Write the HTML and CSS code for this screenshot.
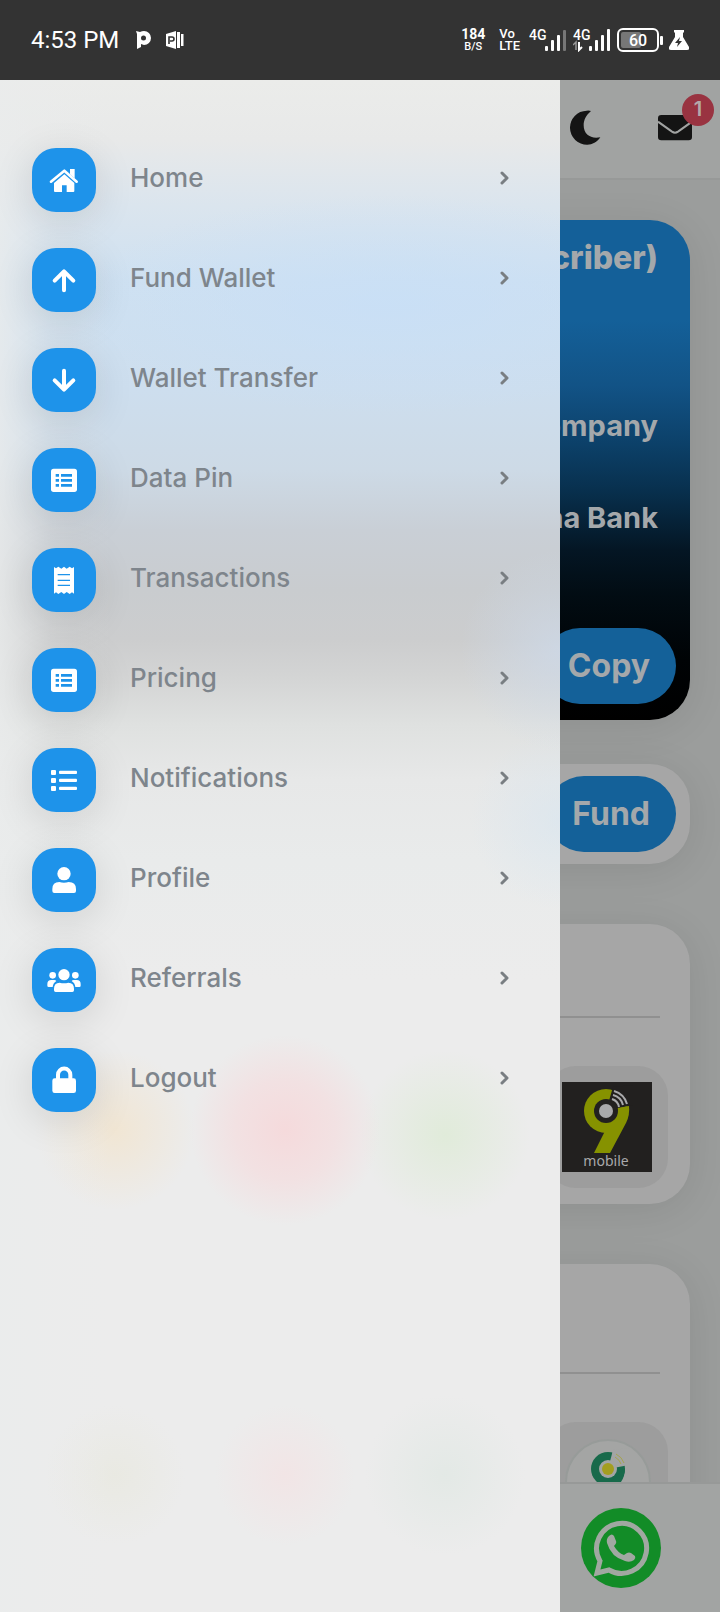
FILE: index.html
```html
<!DOCTYPE html>
<html lang="en">
  <head>
    <meta charset="UTF-8" />
    <meta name="viewport" content="width=device-width, initial-scale=1.0" />
    <title>Dashboard</title>
    <link rel="stylesheet" href="styles.css">
  </head>
  <body>
    <div class="status">
      <span class="clock">4:53 PM</span>
      <svg class="app-icon" width="15" height="20" viewBox="0 0 15 20"><path d="M0 1l4 1q2-1 4-1a7 7 0 0 1 0 14l-3-1v3l-4 2V4z" fill="#fff"/><circle cx="7.500" cy="8" r="2.500" fill="#333"/></svg>
      <svg width="20" height="20" viewBox="0 0 20 20"><path d="M1 4l10-3v18L1 16z" fill="#fff"/><path d="M12 2h3v16h-3zM16 4h2.500v12H16z" fill="#fff"/><path d="M4 14V7h3a2 2 0 0 1 0 4H5" fill="none" stroke="#333" stroke-width="1.600"/></svg>
      <div class="signals">
        <div class="stack speed"><b>184</b><small>B/S</small></div>
        <div class="stack volte"><span>Vo</span><span>LTE</span></div>
        <svg width="38" height="24" viewBox="0 0 38 24" fill="#fff">
          <text x="0" y="12" class="net">4G</text>
          <rect x="16" y="18" width="3" height="5" rx="1"/><rect x="22" y="12" width="3" height="11" rx="1"/><rect x="28" y="7" width="3" height="16" rx="1"/><rect x="34" y="2" width="3" height="21" rx="1" fill="#777"/>
        </svg>
        <svg width="38" height="24" viewBox="0 0 38 24" fill="#fff">
          <text x="0" y="12" class="net">4G</text>
          <path d="M0 17l3-3v8" fill="none" stroke="#999" stroke-width="1.500"/><path d="M6 14v8l3-3" fill="none" stroke="#fff" stroke-width="2"/>
          <rect x="16" y="18" width="3" height="5" rx="1"/><rect x="22" y="12" width="3" height="11" rx="1"/><rect x="28" y="7" width="3" height="16" rx="1"/><rect x="34" y="1" width="3" height="22" rx="1"/>
        </svg>
        <svg width="46" height="24" viewBox="0 0 46 24">
          <rect x="1" y="1" width="40" height="22" rx="5" fill="none" stroke="#fff" stroke-width="2"/>
          <rect x="4" y="4" width="20" height="16" rx="2" fill="#777"/><rect x="43" y="8" width="3" height="9" rx="1" fill="#fff"/>
          <text x="21" y="18" text-anchor="middle" class="level" fill="#fff">60</text>
        </svg>
        <svg width="20" height="22" viewBox="0 0 20 22"><path d="M5 1h10v2l-1 1v4l6 10q1 3-2 3H2q-3 0-2-3L6 8V4L5 3z" fill="#fff"/><path d="M11 8l-5 6h3l-1 4 5-6h-3z" fill="#333"/></svg>
      </div>
    </div>

    <header class="topbar">
      <button class="icon-btn" aria-label="Dark mode">
        <svg width="34" height="36" viewBox="0 0 102 108"><path d="M63 3C48 16 41 30 41 46c0 28 22 42 50 36-10 15-24 22-39 22A51 51 0 0 1 50 2q8-1 13 1z" fill="#141414"/></svg>
      </button>
      <button class="icon-btn" aria-label="Messages">
        <svg width="34" height="26" viewBox="0 0 102 78"><rect width="102" height="76" rx="10" fill="#141414"/><path d="M0 20l42 30q9 6 18 0l42-30" fill="none" stroke="#a1a3a2" stroke-width="6"/></svg>
        <span class="badge">1</span>
      </button>
    </header>

    <main class="page">
      <section class="card account">
        <h1>(Subscriber)</h1>
        <p class="company">Company</p>
        <p class="bank">Wema Bank</p>
        <button class="btn">Copy</button>
      </section>
      <section class="card wallet">
        <button class="btn">Fund</button>
      </section>
      <section class="card services">
        <hr>
        <a href="#" class="tile">
          <svg width="90" height="90" viewBox="0 0 90 90">
            <rect width="90" height="90" fill="#22201f"/>
            <circle cx="44" cy="29" r="22" fill="#869200"/>
            <path d="M44 29l7-24 20-2v20z" fill="#22201f"/>
            <path d="M56 26l11-2q1 9-3 17L48 71H32l11-22z" fill="#869200"/>
            <circle cx="44" cy="29" r="12" fill="#22201f"/>
            <circle cx="44" cy="29" r="7" fill="#a9a9ab"/>
            <path d="M50 17q6 2 7 8M51 13q8 2 10 10M52 9q10 3 13 13" fill="none" stroke="#a9a9ab" stroke-width="2"/>
            <text x="44" y="84" text-anchor="middle" class="mobile">mobile</text>
          </svg>
        </a>
      </section>
      <section class="card services">
        <hr>
        <a href="#" class="tile">
          <svg width="90" height="90" viewBox="0 0 90 90">
            <circle cx="46" cy="44" r="42" fill="#a4a5a4" stroke="#979b99" stroke-width="2"/>
            <circle cx="46" cy="31" r="17" fill="#186a4b"/>
            <path d="M46 31l5-19 16-2v17z" fill="#a4a5a4"/>
            <path d="M63 30q0 8-4 14l-9 20H38l8-18z" fill="#186a4b"/>
            <circle cx="46" cy="31" r="9" fill="#a4a5a4"/>
            <circle cx="46" cy="31" r="6" fill="#a39e20"/>
            <path d="M53 19q5 3 6 7M54 16q6 3 8 9" fill="none" stroke="#a5a44e" stroke-width="1"/>
          </svg>
        </a>
      </section>
    </main>

    <footer class="bottombar">
      <a href="#" aria-label="WhatsApp">
        <svg width="80" height="80" viewBox="0 0 80 80">
          <circle cx="40" cy="40" r="40" fill="#128c27"/>
          <path d="M19 53A25 25 0 1 1 28 62L16 65z" fill="none" stroke="#a1a8a1" stroke-width="5"/>
          <path d="M28 28q3-3 5 0l2 5q1 2-2 5 4 7 10 9l3-2q2-1 4 0l4 3q1 2-1 4-4 3-9 1-14-4-18-18-1-4 2-7z" fill="#a1a8a1"/>
        </svg>
      </a>
    </footer>

    <nav class="drawer">
      <a href="#" class="item">
        <span class="icon"><svg viewBox="0 0 192 192"><path d="M57 101l40-33 37 33" class="line roof"/><path d="M114 63h14v28l-14-12zM66 105l31-26 30 26v24q0 3-3 3h-20v-20H90v20H69q-3 0-3-3z"/></svg></span>
        <span class="label">Home</span><svg class="arrow" viewBox="0 0 10 14"><path d="M2 2l5 5-5 5"/></svg>
      </a>
      <a href="#" class="item">
        <span class="icon"><svg viewBox="0 0 192 192"><path d="M96 127V72M68 98l28-28 28 28" class="line"/></svg></span>
        <span class="label">Fund Wallet</span><svg class="arrow" viewBox="0 0 10 14"><path d="M2 2l5 5-5 5"/></svg>
      </a>
      <a href="#" class="item">
        <span class="icon"><svg viewBox="0 0 192 192"><path d="M96 68v55M68 97l28 28 28-28" class="line"/></svg></span>
        <span class="label">Wallet Transfer</span><svg class="arrow" viewBox="0 0 10 14"><path d="M2 2l5 5-5 5"/></svg>
      </a>
      <a href="#" class="item">
        <span class="icon"><svg viewBox="0 0 192 192"><rect x="57" y="62" width="78" height="70" rx="8"/><path d="M87 82h33M87 97h33M87 112h33M71 82h10M71 97h10M71 112h10" class="cut"/></svg></span>
        <span class="label">Data Pin</span><svg class="arrow" viewBox="0 0 10 14"><path d="M2 2l5 5-5 5"/></svg>
      </a>
      <a href="#" class="item">
        <span class="icon"><svg viewBox="0 0 192 192"><path d="M66 57l6 4 7-5 9 6 8-6 8 6 9-6 7 5 6-4v80l-6-4-7 5-9-6-8 6-8-6-9 6-7-5-6 4z"/><path d="M77 80h37M77 97h37M77 112h37" class="cut thin"/></svg></span>
        <span class="label">Transactions</span><svg class="arrow" viewBox="0 0 10 14"><path d="M2 2l5 5-5 5"/></svg>
      </a>
      <a href="#" class="item">
        <span class="icon"><svg viewBox="0 0 192 192"><rect x="57" y="62" width="78" height="70" rx="8"/><path d="M87 82h33M87 97h33M87 112h33M71 82h10M71 97h10M71 112h10" class="cut"/></svg></span>
        <span class="label">Pricing</span><svg class="arrow" viewBox="0 0 10 14"><path d="M2 2l5 5-5 5"/></svg>
      </a>
      <a href="#" class="item">
        <span class="icon"><svg viewBox="0 0 192 192"><rect x="57" y="66" width="15" height="15" rx="3"/><rect x="57" y="90" width="15" height="15" rx="3"/><rect x="57" y="114" width="15" height="15" rx="3"/><rect x="81" y="68" width="54" height="10" rx="3"/><rect x="81" y="92" width="54" height="10" rx="3"/><rect x="81" y="116" width="54" height="10" rx="3"/></svg></span>
        <span class="label">Notifications</span><svg class="arrow" viewBox="0 0 10 14"><path d="M2 2l5 5-5 5"/></svg>
      </a>
      <a href="#" class="item">
        <span class="icon"><svg viewBox="0 0 192 192"><circle cx="96" cy="77" r="20"/><path d="M61 123q0-21 21-21 14 4 28 0 22 0 22 21v6q0 6-6 6H67q-6 0-6-6z"/></svg></span>
        <span class="label">Profile</span><svg class="arrow" viewBox="0 0 10 14"><path d="M2 2l5 5-5 5"/></svg>
      </a>
      <a href="#" class="item">
        <span class="icon"><svg viewBox="0 0 192 192"><circle cx="96" cy="80" r="17"/><circle cx="62" cy="82" r="10"/><circle cx="130" cy="82" r="10"/><path d="M66 122q0-18 17-18 13 4 26 0 17 0 17 18v5q0 5-5 5H71q-5 0-5-5zM46 108q0-12 12-12h9q4 0 6 3-10 6-11 18H50q-4 0-4-4zM146 108q0-12-12-12h-9q-4 0-6 3 10 6 11 18h12q4 0 4-4z"/></svg></span>
        <span class="label">Referrals</span><svg class="arrow" viewBox="0 0 10 14"><path d="M2 2l5 5-5 5"/></svg>
      </a>
      <a href="#" class="item">
        <span class="icon"><svg viewBox="0 0 192 192"><rect x="61" y="91" width="71" height="44" rx="7"/><path d="M78 94V80a18 18 0 0 1 37 0v14" class="line"/></svg></span>
        <span class="label">Logout</span><svg class="arrow" viewBox="0 0 10 14"><path d="M2 2l5 5-5 5"/></svg>
      </a>
    </nav>
  </body>
</html>
```
FILE: styles.css
```css
* {
  box-sizing: border-box;
}
body {
  margin: 0;
  height: 100vh;
  display: flex;
  flex-direction: column;
  overflow: hidden;
  position: relative;
  font-family: Inter, sans-serif;
  background-color: #9b9d9c;
}
button {
  border: none;
  padding: 0;
  font-family: inherit;
}
a {
  text-decoration: none;
}
svg {
  display: block;
}

/* status bar */
.status {
  flex: none;
  height: 80px;
  padding: 0 31px;
  display: flex;
  align-items: center;
  background-color: #333;
  color: #fff;
  font-family: Roboto, sans-serif;
}
.clock {
  font-size: 24px;
}
.app-icon {
  margin: 0 14px 0 17px;
}
.signals {
  margin-left: auto;
  display: flex;
  align-items: center;
  gap: 6px;
}
.stack {
  display: flex;
  flex-direction: column;
  margin-right: 3px;
  font-weight: 500;
}
.speed {
  align-items: center;
  font-size: 14px;
  line-height: 13px;
  margin-right: 8px;
}
.speed small {
  font-size: 11px;
  line-height: 11px;
}
.volte {
  font-size: 13px;
  line-height: 12px;
}
.net {
  font-size: 14px;
  font-weight: 500;
}
.level {
  font-size: 16px;
  font-weight: 500;
}

/* top bar */
.topbar {
  flex: none;
  height: 100px;
  padding: 0 28px 2px;
  display: flex;
  align-items: center;
  justify-content: flex-end;
  gap: 54px;
  background-color: #a1a3a2;
  border-bottom: 2px solid #979998;
}
.icon-btn {
  position: relative;
  background: none;
}
.badge {
  position: absolute;
  top: -21px;
  right: -22px;
  width: 32px;
  height: 32px;
  border-radius: 50%;
  background-color: #993341;
  color: #b4a9aa;
  font-size: 20px;
  font-weight: 600;
  line-height: 30px;
}

/* page */
.page {
  flex: 1;
  min-height: 0;
  overflow: hidden;
  padding: 40px 30px 0;
}
.card {
  border-radius: 40px;
  background-color: #a6a6a6;
  box-shadow: 0 6px 40px rgba(0, 0, 0, 0.09);
  margin-bottom: 60px;
}
.account {
  height: 500px;
  margin-bottom: 44px;
  padding: 18px 14px 16px;
  display: flex;
  flex-direction: column;
  align-items: flex-end;
  background: linear-gradient(#146099 20%, #125386 33%, #0c4068 45%, #08304e 54%, #041624 66%, #020c13 75%, #000305 88%, #000);
  color: #a4a8ab;
}
.account h1,
.account p {
  margin: 0;
  padding-right: 18px;
  font-size: 29px;
  font-weight: 700;
  line-height: 36px;
}
.account h1 {
  font-size: 32px;
  font-weight: 800;
  line-height: 40px;
}
.account .company {
  margin-top: 130px;
}
.account .bank {
  margin-top: 56px;
}
.btn {
  height: 76px;
  padding: 0 26px 2px;
  border-radius: 38px;
  background-color: #146199;
  color: #a4a8ab;
  font-size: 32px;
  font-weight: 700;
}
.account .btn {
  margin-top: auto;
}
.wallet {
  padding: 12px 14px;
  display: flex;
  justify-content: flex-end;
}
.services {
  height: 280px;
  padding: 92px 22px 16px 30px;
  display: flex;
  flex-direction: column;
  align-items: flex-end;
}
.services:last-child {
  height: 300px;
  padding-top: 108px;
}
.services hr {
  flex: none;
  align-self: stretch;
  height: 2px;
  margin: 0 8px 48px 0;
  border: none;
  background-color: #909090;
}
.tile {
  flex: none;
  padding: 16px;
  border-radius: 30px;
  background-color: #9d9d9d;
}
.mobile {
  font-family: "Noto Sans", sans-serif;
  font-size: 14px;
  fill: #a9a9ab;
}

/* bottom bar */
.bottombar {
  flex: none;
  height: 130px;
  padding: 0 59px;
  display: flex;
  align-items: center;
  justify-content: flex-end;
  background-color: #a2a4a3;
  border-top: 2px solid #979998;
}

/* side menu */
.drawer {
  position: absolute;
  top: 80px;
  bottom: 0;
  left: 0;
  width: 560px;
  padding: 50px 50px 0 32px;
  background:
    linear-gradient(to right, rgba(234, 236, 236, 0.8), rgba(234, 236, 236, 0.3) 50px, rgba(234, 236, 236, 0) 110px),
    radial-gradient(circle at 115px 1050px, rgba(242, 228, 205, 0.8), rgba(242, 228, 205, 0) 80px),
    radial-gradient(circle at 285px 1050px, rgba(246, 216, 218, 0.9), rgba(246, 218, 220, 0.6) 50px, rgba(246, 220, 222, 0) 95px),
    radial-gradient(circle at 445px 1055px, rgba(223, 235, 216, 0.9), rgba(223, 235, 216, 0) 85px),
    radial-gradient(circle at 115px 1395px, rgba(232, 232, 222, 0.7), rgba(232, 232, 222, 0) 70px),
    radial-gradient(circle at 285px 1395px, rgba(243, 227, 228, 0.8), rgba(243, 227, 228, 0) 70px),
    radial-gradient(circle at 445px 1395px, rgba(225, 232, 228, 0.8), rgba(225, 232, 228, 0) 80px),
    radial-gradient(circle at 560px 740px, rgba(215, 229, 240, 0.6), rgba(215, 229, 240, 0) 90px),
    radial-gradient(circle at 560px 570px, rgba(205, 218, 235, 0.7), rgba(205, 218, 235, 0) 100px),
    radial-gradient(320px 110px at 390px 225px, rgba(200, 223, 247, 0.8), rgba(200, 223, 247, 0)),
    linear-gradient(#ebecea 0, #e8e9e9 60px, #dbe5ee 125px, #cfe1f1 200px, #cddeee 310px, #cddae6 390px, #c9cfd6 450px, #c9cccf 510px, #cccdce 560px, #d3d4d4 595px, #dfe1e0 645px, #e7e8e8 700px, #e9ebeb 780px, #ececec 900px, #ececec 100%);
}
.item {
  height: 100px;
  display: flex;
  align-items: center;
  color: #7e858c;
  font-size: 26px;
  font-weight: 500;
}
.icon {
  width: 64px;
  height: 64px;
  margin-right: 34px;
  border-radius: 24px;
  background-color: #1e93ea;
  box-shadow: 0 8px 40px rgba(0, 0, 0, 0.12);
}
.icon svg {
  fill: #fff;
}
.icon .line {
  fill: none;
  stroke: #fff;
  stroke-width: 12;
  stroke-linecap: round;
  stroke-linejoin: round;
}
.icon .roof {
  stroke-width: 8;
}
.icon .cut {
  stroke: #1e93ea;
  stroke-width: 8;
}
.icon .thin {
  stroke-width: 4;
}
.label {
  flex: 1;
  padding-bottom: 6px;
}
.arrow {
  width: 10px;
  height: 14px;
  margin-bottom: 4px;
  fill: none;
  stroke: #797e82;
  stroke-width: 3;
  stroke-linecap: round;
  stroke-linejoin: round;
}
```
